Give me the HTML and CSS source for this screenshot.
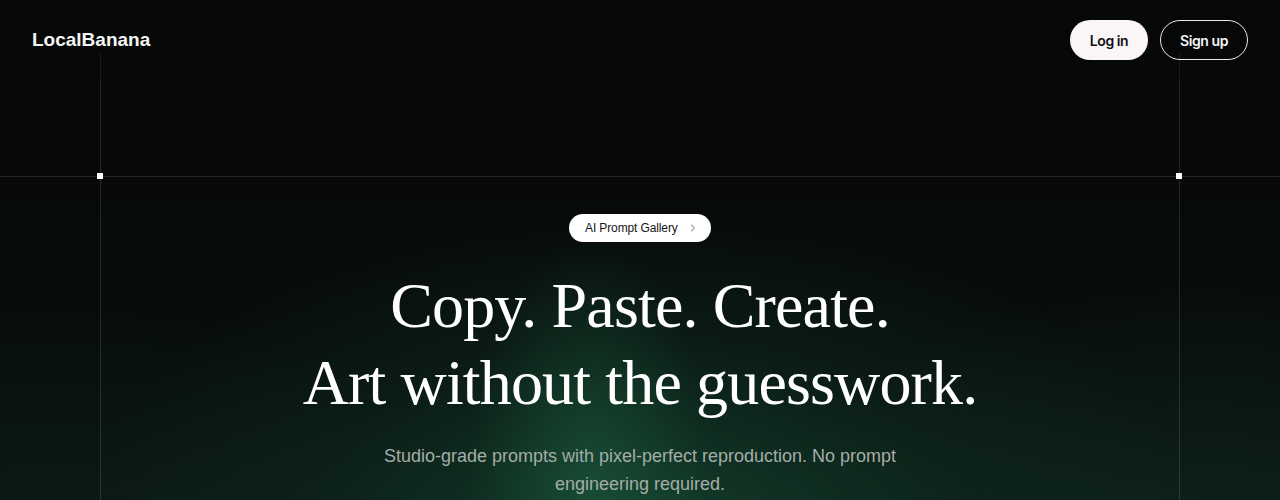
FILE: index.html
```html
<!DOCTYPE html>
<html lang="en">
<head>
<meta charset="utf-8">
<title>LocalBanana</title>
<link rel="stylesheet" href="styles.css">
</head>
<body>
<div class="page">
  <header class="nav">
    <a class="logo" href="#">LocalBanana</a>
    <div class="nav-actions">
      <a class="btn btn-light" href="#">Log in</a>
      <a class="btn btn-outline" href="#">Sign up</a>
    </div>
  </header>
  <section class="hero">
    <div class="hero-top">
      <div class="frame-top"></div>
    </div>
    <div class="frame">
      <span class="corner corner-left"></span>
      <span class="corner corner-right"></span>
      <div class="hero-content">
        <a class="pill" href="#">AI Prompt Gallery
          <svg class="chev" width="8" height="8" viewBox="0 0 8 8" aria-hidden="true"><path d="M2.5 1 L5.5 4 L2.5 7" fill="none" stroke="currentColor" stroke-width="1.1" stroke-linecap="round" stroke-linejoin="round"/></svg>
        </a>
        <h1 class="title">Copy. Paste. Create.<br>Art without the guesswork.</h1>
        <p class="subtitle">Studio-grade prompts with pixel-perfect reproduction. No prompt engineering required.</p>
      </div>
    </div>
  </section>
</div>
</body>
</html>
```

FILE: styles.css
```css
* { box-sizing: border-box; }
html, body { margin: 0; padding: 0; }
body {
  background: #050707;
  color: #fff;
  font-family: "Liberation Sans", Arial, sans-serif;
  overflow: hidden;
}
a { text-decoration: none; color: inherit; }

.page {
  position: relative;
  min-height: 500px;
  background:
    radial-gradient(ellipse 120px 240px at 590px 480px, rgba(30, 95, 66, 0.5), rgba(30, 95, 66, 0) 100%),
    radial-gradient(ellipse 560px 320px at 640px 530px, rgba(22, 74, 52, 0.8), rgba(18, 60, 42, 0.3) 60%, rgba(10, 30, 22, 0) 100%),
    radial-gradient(ellipse 440px 280px at 1200px 560px, rgba(18, 50, 36, 0.6), rgba(10, 30, 22, 0) 100%),
    radial-gradient(ellipse 420px 260px at 60px 560px, rgba(16, 42, 30, 0.5), rgba(10, 30, 22, 0) 100%),
    linear-gradient(180deg, #060807 0%, #070a09 40%, #08100d 100%);
}

.nav {
  position: relative;
  z-index: 2;
  display: flex;
  align-items: center;
  justify-content: space-between;
  height: 80px;
  padding: 0 32px;
}
.logo {
  font-weight: 700;
  font-size: 19px;
  letter-spacing: 0;
  color: #f5f5f5;
}
.nav-actions {
  display: flex;
  gap: 12px;
}
.btn {
  display: inline-flex;
  align-items: center;
  justify-content: center;
  height: 40px;
  border-radius: 20px;
  font-family: Inter, "Liberation Sans", sans-serif;
  font-weight: 600;
  font-size: 14px;
  letter-spacing: -0.03em;
}
.btn-light {
  width: 78px;
  background: #faf5f7;
  color: #111;
}
.btn-outline {
  width: 88px;
  border: 1px solid #e8e8e8;
  color: #f5f5f5;
}

.hero {
  position: relative;
}
.hero-top {
  height: 97px;
  border-bottom: 1px solid rgba(255, 255, 255, 0.12);
  padding: 0 100px;
}
.frame-top {
  position: relative;
  height: 100%;
  border-left: 1px solid rgba(255, 255, 255, 0.12);
  border-right: 1px solid rgba(255, 255, 255, 0.12);
}
.frame-top::before {
  content: "";
  position: absolute;
  left: -1px;
  right: -1px;
  top: -28px;
  height: 28px;
  border-left: 1px solid rgba(255, 255, 255, 0.08);
  border-right: 1px solid rgba(255, 255, 255, 0.08);
}
.frame {
  position: relative;
  margin: 0 100px;
  border-left: 1px solid rgba(255, 255, 255, 0.12);
  border-right: 1px solid rgba(255, 255, 255, 0.12);
  min-height: 324px;
}
.corner {
  position: absolute;
  top: -4px;
  width: 6px;
  height: 6px;
  background: #fff;
}
.corner-left { left: -4px; }
.corner-right { right: -3px; }

.hero-content {
  display: flex;
  flex-direction: column;
  align-items: center;
  padding-top: 37px;
  text-align: center;
}
.pill {
  display: inline-flex;
  align-items: center;
  gap: 6px;
  height: 28px;
  width: 142px;
  padding: 0 14px 0 16px;
  border-radius: 14px;
  background: #fff;
  color: #161616;
  font-size: 12px;
  letter-spacing: -0.01em;
}
.chev {
  color: #a8a8a8;
  margin-left: 5px;
}
.title {
  margin: 26px 0 0;
  font-family: "Liberation Serif", "Times New Roman", serif;
  font-weight: 400;
  font-size: 64px;
  line-height: 1.2;
  letter-spacing: -0.85px;
  color: #fff;
}
.subtitle {
  margin: 20px 0 0;
  max-width: 520px;
  font-size: 18px;
  line-height: 28px;
  color: #a4ada8;
}
```
